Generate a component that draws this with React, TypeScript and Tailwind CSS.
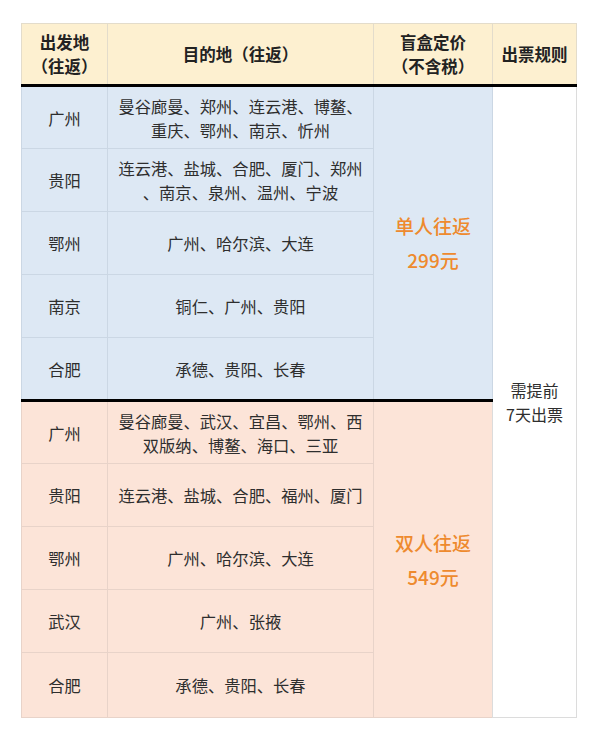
const blueRows = [
  { from: "广州", to: ["曼谷廊曼、郑州、连云港、博鳌、", "重庆、鄂州、南京、忻州"] },
  { from: "贵阳", to: ["连云港、盐城、合肥、厦门、郑州", "、南京、泉州、温州、宁波"] },
  { from: "鄂州", to: ["广州、哈尔滨、大连"] },
  { from: "南京", to: ["铜仁、广州、贵阳"] },
  { from: "合肥", to: ["承德、贵阳、长春"] },
];

const pinkRows = [
  { from: "广州", to: ["曼谷廊曼、武汉、宜昌、鄂州、西", "双版纳、博鳌、海口、三亚"] },
  { from: "贵阳", to: ["连云港、盐城、合肥、福州、厦门"] },
  { from: "鄂州", to: ["广州、哈尔滨、大连"] },
  { from: "武汉", to: ["广州、张掖"] },
  { from: "合肥", to: ["承德、贵阳、长春"] },
];

function Lines({ lines }: { lines: string[] }) {
  return (
    <>
      {lines.map((l, i) => (
        <div key={i}>{l}</div>
      ))}
    </>
  );
}

export default function App() {
  const font = { fontFamily: '"Noto Sans CJK SC", "Noto Sans", sans-serif' };
  return (
    <div className="w-[600px] h-[750px] bg-white pt-[23px] pl-[21px]" style={font}>
      <table className="border-collapse table-fixed w-[555px] text-[16.3px] leading-[24px] text-[#2e2e2e] text-center">
        <colgroup>
          <col className="w-[86px]" />
          <col className="w-[266px]" />
          <col className="w-[119px]" />
          <col className="w-[84px]" />
        </colgroup>
        <thead>
          <tr className="h-[62px] bg-[#fdf0d0] font-bold text-[#222] text-[16.5px]">
            <th className="border border-[#e3dccb] border-b-[3px] border-b-black">
              出发地
              <br />
              （往返）
            </th>
            <th className="border border-[#e3dccb] border-b-[3px] border-b-black">目的地（往返）</th>
            <th className="border border-[#e3dccb] border-b-[3px] border-b-black">
              盲盒定价
              <br />
              （不含税）
            </th>
            <th className="border border-[#e3dccb] border-b-[3px] border-b-black">出票规则</th>
          </tr>
        </thead>
        <tbody>
          {blueRows.map((r, i) => (
            <tr key={`b-${i}`} className="h-[63px] bg-[#dde8f4]">
              <td className="border border-[#cbd7e4]">{r.from}</td>
              <td className="border border-[#cbd7e4] px-1">
                <Lines lines={r.to} />
              </td>
              {i === 0 && (
                <td rowSpan={5} className="border border-[#cbd7e4] text-[#ee8a2e] text-[19px] leading-[34px] font-medium">
                  单人往返
                  <br />
                  299元
                </td>
              )}
              {i === 0 && (
                <td rowSpan={10} className="border border-[#dcdcdc] bg-white text-[16px] leading-[24px]">
                  需提前
                  <br />
                  7天出票
                </td>
              )}
            </tr>
          ))}
          {pinkRows.map((r, i) => (
            <tr key={`p-${i}`} className={i === 4 ? "h-[65px] bg-[#fce4d8]" : "h-[63px] bg-[#fce4d8]"}>
              <td className={i === 0 ? "border border-[#e8d3c9] border-t-[3px] border-t-black" : "border border-[#e8d3c9]"}>
                {r.from}
              </td>
              <td className={i === 0 ? "border border-[#e8d3c9] border-t-[3px] border-t-black px-1" : "border border-[#e8d3c9] px-1"}>
                <Lines lines={r.to} />
              </td>
              {i === 0 && (
                <td rowSpan={5} className="border border-[#e8d3c9] border-t-[3px] border-t-black text-[#ee8a2e] text-[19px] leading-[34px] font-medium">
                  双人往返
                  <br />
                  549元
                </td>
              )}
            </tr>
          ))}
        </tbody>
      </table>
    </div>
  );
}
